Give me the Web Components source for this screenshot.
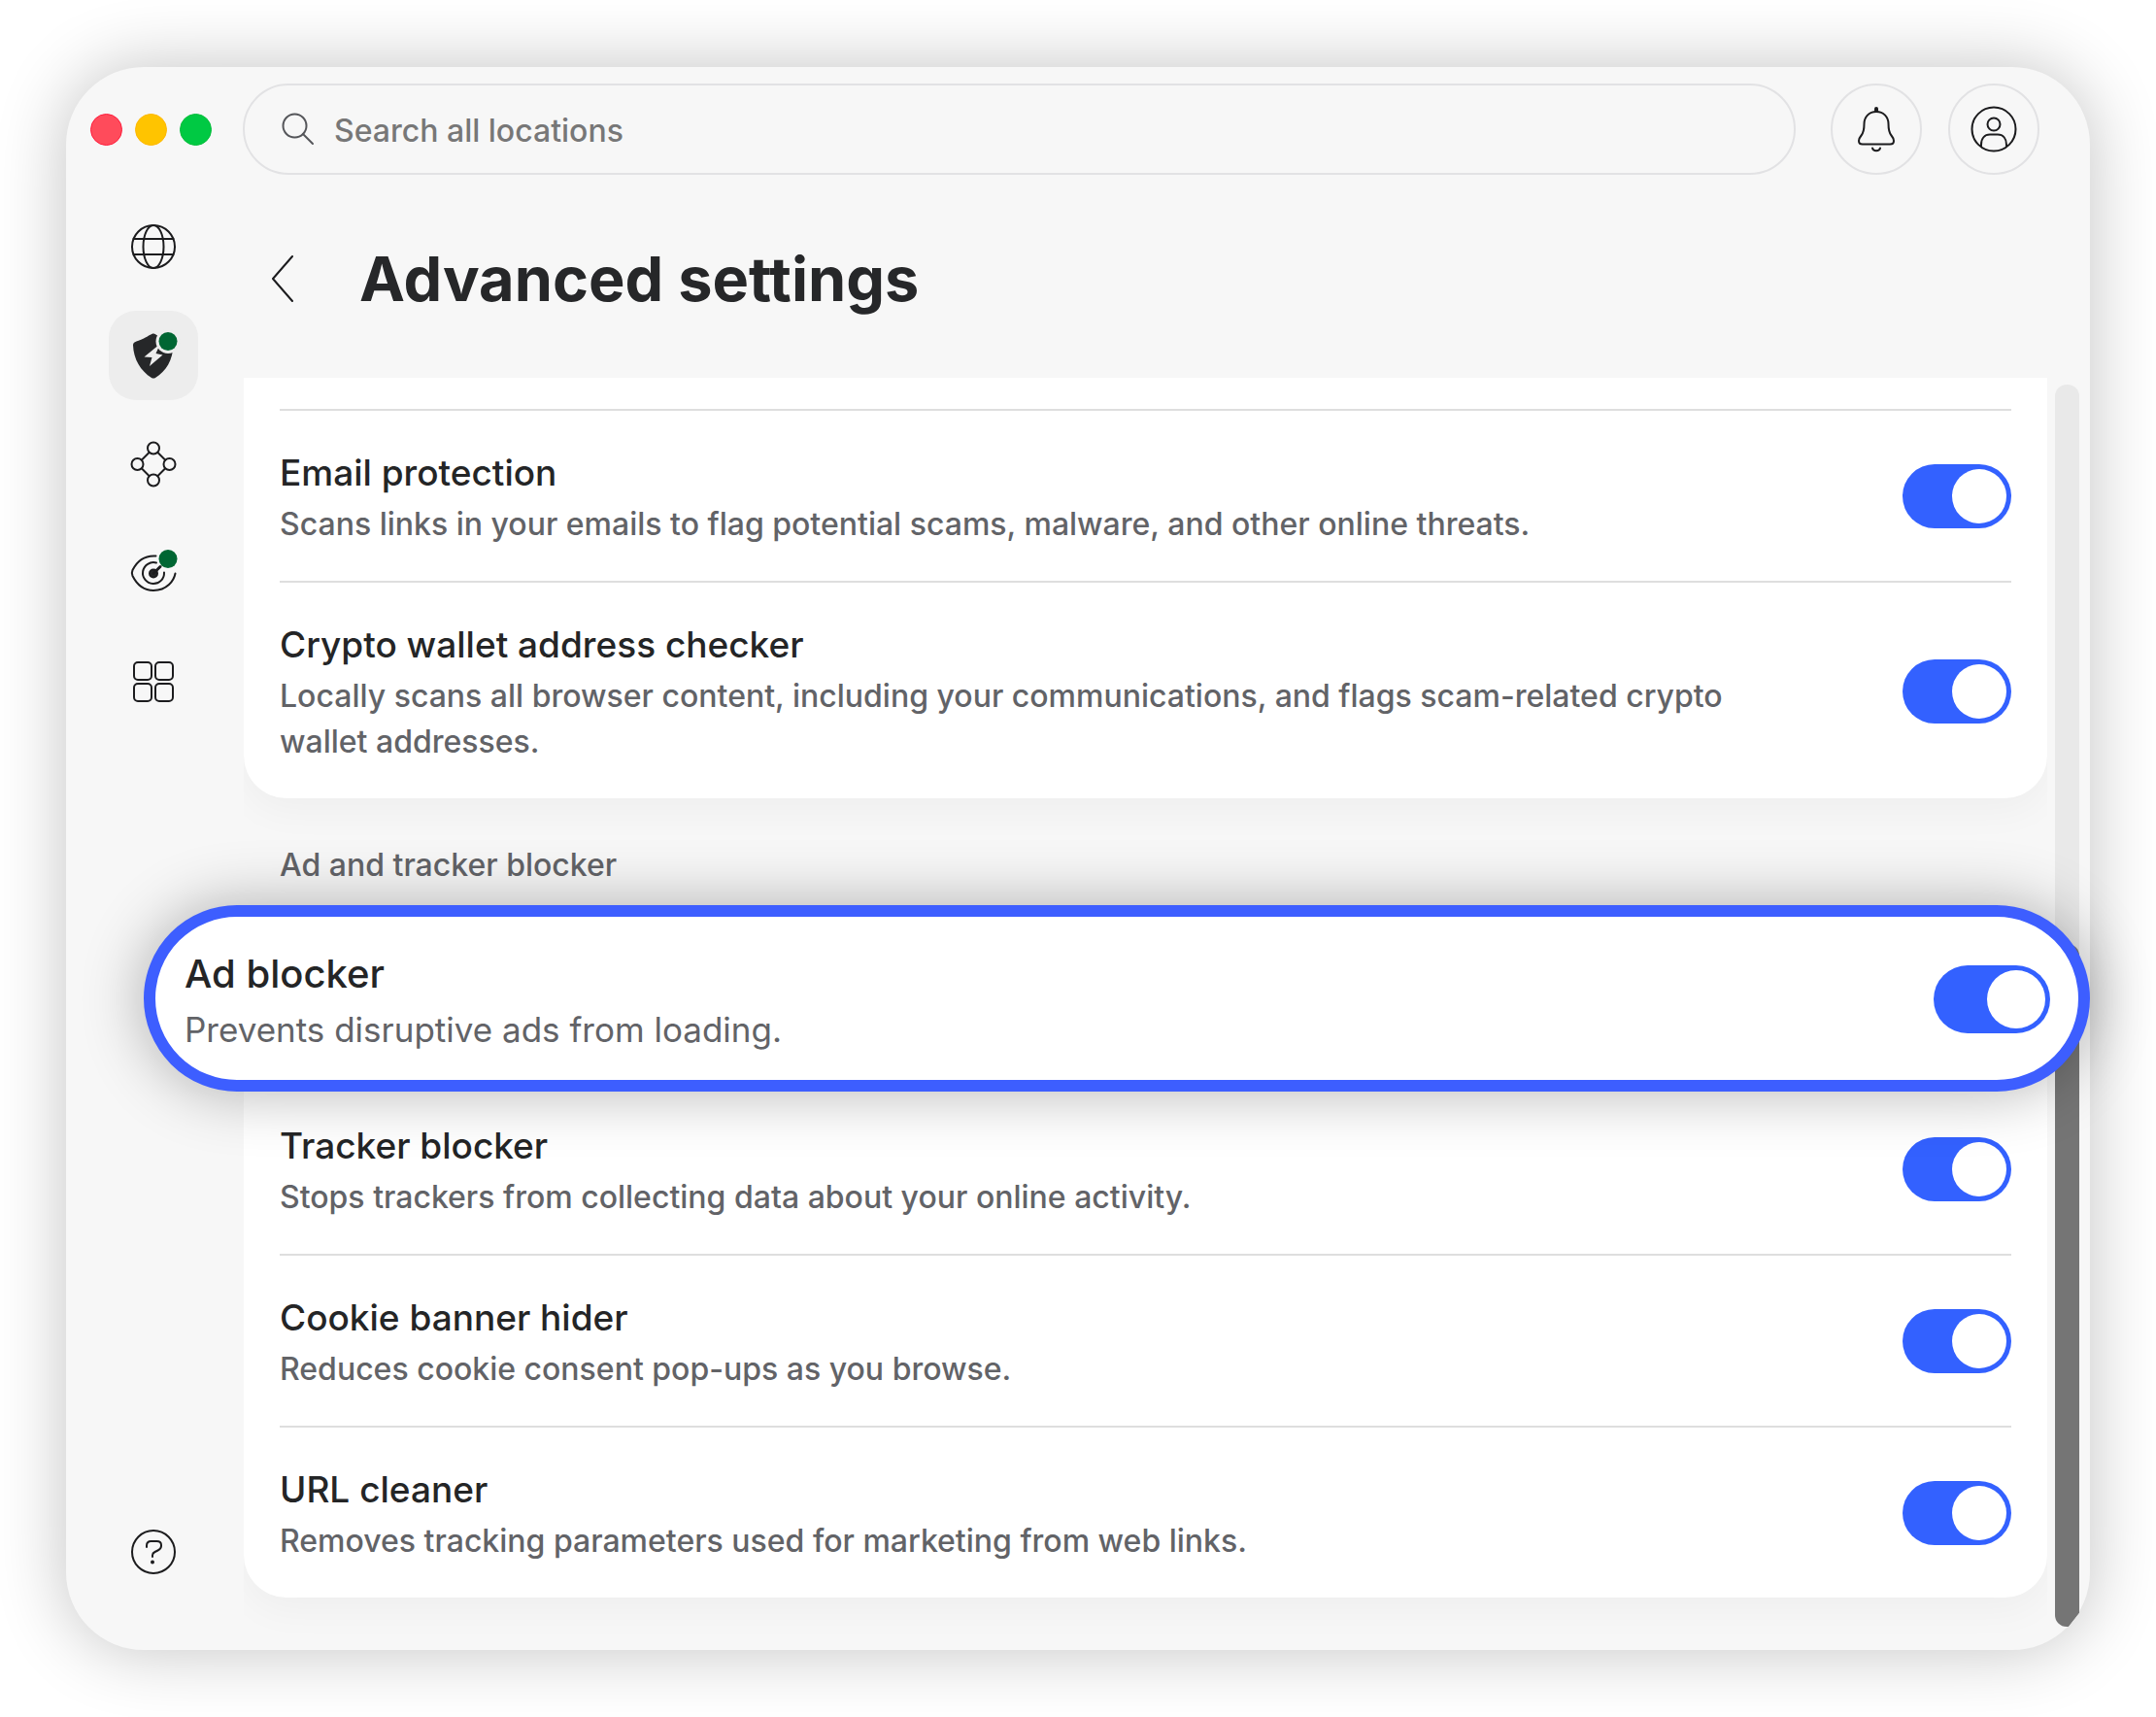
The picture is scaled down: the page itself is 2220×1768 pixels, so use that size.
<!DOCTYPE html>
<html lang="en">
<head>
<meta charset="UTF-8">
<title>Advanced settings</title>
<style>
  body {
    margin: 0;
    background: #fff;
    color: #242526;
    font-family: Inter, "Liberation Sans", sans-serif;
  }
</style>
</head>
<body>
<app-window>
  <top-bar slot="top"></top-bar>
  <side-bar slot="side"></side-bar>
  <page-title slot="title">Advanced settings</page-title>
  <settings-card class="continued">
    <setting-row name="Email protection" text="Scans links in your emails to flag potential scams, malware, and other online threats."></setting-row>
    <setting-row name="Crypto wallet address checker" text="Locally scans all browser content, including your communications, and flags scam-related crypto wallet addresses."></setting-row>
  </settings-card>
  <settings-card class="spotlit" heading="Ad and tracker blocker">
    <setting-row slot="spotlight" class="large" name="Ad blocker" text="Prevents disruptive ads from loading."></setting-row>
    <setting-row name="Tracker blocker" text="Stops trackers from collecting data about your online activity."></setting-row>
    <setting-row name="Cookie banner hider" text="Reduces cookie consent pop-ups as you browse."></setting-row>
    <setting-row name="URL cleaner" text="Removes tracking parameters used for marketing from web links."></setting-row>
  </settings-card>
</app-window>

<script>
class AppWindow extends HTMLElement {
  constructor() {
    super();
    this.attachShadow({mode: "open"});
  }

  getTemplate() {
    const template = document.createElement("template");
    template.innerHTML = `
      <div class="window">
        <slot name="top"></slot>
        <div class="body">
          <slot name="side"></slot>
          <main>
            <slot name="title"></slot>
            <div class="scroller">
              <div class="list"><slot></slot></div>
              <div class="track"><div class="thumb"></div></div>
            </div>
          </main>
        </div>
      </div>
      ${this.getStyles()}
    `;
    return template;
  }

  getStyles() {
    return `
      <style>
      :host {
        display: flex;
        box-sizing: border-box;
        min-height: 100vh;
        padding: 69px 68px;
      }
      .window {
        flex: 1;
        display: flex;
        flex-direction: column;
        min-width: 0;
        background: #f7f7f7;
        border-radius: 80px;
        box-shadow: 0 0 72px rgba(0, 0, 0, .24);
      }
      .body {
        flex: 1;
        display: flex;
      }
      main {
        flex: 1;
        min-width: 0;
        display: flex;
        flex-direction: column;
      }
      .scroller {
        flex: 1;
        display: flex;
        gap: 8px;
        padding-right: 11px;
      }
      /* above the scrollbar, the spotlight runs over it */
      .list {
        position: relative;
        z-index: 1;
        flex: 1;
        min-width: 0;
        padding-bottom: 54px;
      }
      .track {
        display: flex;
        flex-direction: column;
        justify-content: flex-end;
        width: 25px;
        margin: 7px 0 24px;
        border-radius: 12px;
        background: #e9e9e9;
      }
      /* the window corner cuts the end of the thumb */
      .track, .thumb {
        clip-path: polygon(0 0, 100% 0, 100% calc(100% - 14px), calc(100% - 11px) 100%, 0 100%);
      }
      .thumb {
        height: 55%;
        border-radius: 12px;
        background: #757575;
      }
      </style>
    `;
  }

  connectedCallback() {
    this.shadowRoot.appendChild(this.getTemplate().content.cloneNode(true));
  }
}

class TopBar extends HTMLElement {
  constructor() {
    super();
    this.attachShadow({mode: "open"});
  }

  getTemplate() {
    const template = document.createElement("template");
    template.innerHTML = `
      <div class="lights">
        <button class="red" aria-label="Close"></button>
        <button class="yellow" aria-label="Minimize"></button>
        <button class="green" aria-label="Zoom"></button>
      </div>
      <label class="search">
        <svg width="36" height="36" viewBox="0 0 36 36" fill="none" stroke="#55565a" stroke-width="2" stroke-linecap="round">
          <circle cx="14.500" cy="14.500" r="12"/>
          <path d="M23 23L33 33"/>
        </svg>
        <input type="search" placeholder="Search all locations" aria-label="Search all locations">
      </label>
      <button class="round bell" aria-label="Notifications">
        <svg width="48" height="48" viewBox="0 0 48 48" fill="none" stroke="#1c1c1e" stroke-width="2" stroke-linecap="round" stroke-linejoin="round">
          <path d="M24 6C16.500 6 11.500 11.500 11.500 18.500C11.500 25 11 27.500 8.500 30.500C6.600 32.800 6 34 6 36C6 38.200 7.600 39.500 9.800 39.500H38.200C40.400 39.500 42 38.200 42 36C42 34 41.400 32.800 39.500 30.500C37 27.500 36.500 25 36.500 18.500C36.500 11.500 31.500 6 24 6Z"/>
          <path d="M24 3V5" stroke-width="4"/>
          <path d="M20 43.500C20.800 47 27.200 47 28 43.500"/>
        </svg>
      </button>
      <button class="round" aria-label="Account">
        <svg width="48" height="48" viewBox="0 0 48 48" fill="none" stroke="#1c1c1e" stroke-width="2">
          <circle cx="24" cy="24" r="22.500"/>
          <circle cx="24" cy="19" r="6.500"/>
          <path d="M11 42V40C11 33.500 14.500 29.500 20 29.500H28C33.500 29.500 37 33.500 37 40V42"/>
        </svg>
      </button>
      ${this.getStyles()}
    `;
    return template;
  }

  getStyles() {
    return `
      <style>
      :host {
        display: flex;
        align-items: center;
        padding: 17px 52px 0 25px;
      }
      button {
        flex: none;
        box-sizing: border-box;
        padding: 0;
      }
      .lights {
        display: flex;
        gap: 13px;
        margin-right: 32px;
      }
      .lights button {
        width: 33px;
        height: 33px;
        border-radius: 50%;
      }
      .red { background: #ff4b5b; border: 1px solid #ff1c3c; }
      .yellow { background: #ffc400; border: 1px solid #ffb700; }
      .green { background: #00c943; border: 1px solid #00bd38; }
      .search {
        flex: 1;
        display: flex;
        align-items: center;
        gap: 19px;
        box-sizing: border-box;
        height: 94px;
        margin-right: 36px;
        padding: 0 37px;
        border: 2px solid #e2e2e4;
        border-radius: 47px;
      }
      input {
        flex: 1;
        min-width: 0;
        padding: 4px 0 0;
        border: 0;
        outline: 0;
        background: none;
        font: 450 32px/48px Inter, "Liberation Sans", sans-serif;
      }
      input::placeholder {
        color: #777;
        opacity: 1;
      }
      .round {
        display: grid;
        place-items: center;
        width: 94px;
        height: 94px;
        border: 2px solid #e2e2e4;
        border-radius: 50%;
        background: none;
      }
      .bell {
        margin-right: 27px;
      }
      </style>
    `;
  }

  connectedCallback() {
    this.shadowRoot.appendChild(this.getTemplate().content.cloneNode(true));
  }
}

class SideBar extends HTMLElement {
  constructor() {
    super();
    this.attachShadow({mode: "open"});
  }

  getTemplate() {
    const template = document.createElement("template");
    template.innerHTML = `
      <nav>
        <a href="#web" aria-label="Browsing">
          <svg viewBox="0 0 48 48">
            <circle cx="24" cy="24" r="22"/>
            <ellipse cx="24" cy="24" rx="10.500" ry="22"/>
            <path d="M3.500 16H44.500M3.500 32H44.500"/>
          </svg>
        </a>
        <a href="#protection" class="active" aria-label="Protection">
          <svg viewBox="0 0 48 48">
            <path d="M24 1.500C22 1.500 19 4 14 6.500C10 8.500 7 9 4.500 10.500C3.500 11 3 12 3 13.500C3.500 28 11 40 22 47Q24 48 26 47C37 40 44 29 44.500 13C44.500 11 44 10.500 42 10C35 7.500 29 4.500 26.500 2.500Q25 1.500 24 1.500Z" fill="#262729" stroke="none"/>
            <path d="M31 12L14.500 25.500L22.500 26L20 35L33.500 23.500L26.500 22Z" fill="#ededed" stroke="none"/>
            <circle cx="39" cy="9.500" r="12.500" fill="#ededed" stroke="none"/>
            <circle cx="39" cy="9.500" r="9.500" fill="#006633" stroke="none"/>
          </svg>
        </a>
        <a href="#network" aria-label="Network">
          <svg viewBox="0 0 48 48">
            <circle cx="24" cy="7.500" r="6"/>
            <circle cx="7.500" cy="24" r="6"/>
            <circle cx="40.500" cy="24" r="6"/>
            <circle cx="24" cy="40.500" r="6"/>
            <path d="M19.500 12L12 19.500M28.500 12L36 19.500M12 28.500L19.500 36M36 28.500L28.500 36"/>
          </svg>
        </a>
        <a href="#privacy" aria-label="Privacy">
          <svg viewBox="0 0 48 48">
            <path d="M26.500 6.500C13 5.500 6 14 2.500 21Q1.200 24 2.500 27C6 34 13 42 24 42C38 42 45 32 46.500 24.500"/>
            <path d="M27 13.500A11 11 0 1 0 35 23.500"/>
            <circle cx="24" cy="24.500" r="4" fill="#262729"/>
            <path d="M24 24.500L31 17.500" stroke-width="3"/>
            <circle cx="39" cy="9.500" r="9.500" fill="#006633" stroke="none"/>
          </svg>
        </a>
        <a href="#apps" aria-label="Apps">
          <svg viewBox="0 0 48 48">
            <rect x="4" y="4" width="18" height="18" rx="4"/>
            <rect x="26" y="4" width="18" height="18" rx="4"/>
            <rect x="4" y="26" width="18" height="18" rx="4"/>
            <rect x="26" y="26" width="18" height="18" rx="4"/>
          </svg>
        </a>
      </nav>
      <a href="#help" aria-label="Help">
        <svg viewBox="0 0 48 48">
          <circle cx="24" cy="24" r="22"/>
          <path d="M17 19V17.500C17 14.500 19 13 21.500 13H27.500C30.500 13 32 14.500 32 17V18C32 20.500 30.500 21.500 28.500 22.500L25.500 24C23.500 25 23 25.500 23 27.500V29"/>
          <circle cx="23" cy="34.500" r="2" fill="#1c1c1e" stroke="none"/>
        </svg>
      </a>
      ${this.getStyles()}
    `;
    return template;
  }

  getStyles() {
    return `
      <style>
      :host {
        display: flex;
        flex-direction: column;
        justify-content: space-between;
        width: 92px;
        padding: 28px 47px 55px 44px;
      }
      nav {
        display: flex;
        flex-direction: column;
        gap: 20px;
      }
      a {
        display: grid;
        place-items: center;
        height: 92px;
        border-radius: 28px;
      }
      a.active {
        background: #ededed;
      }
      svg {
        width: 48px;
        height: 48px;
        overflow: visible;
        fill: none;
        stroke: #1c1c1e;
        stroke-width: 2;
        stroke-linecap: round;
      }
      </style>
    `;
  }

  connectedCallback() {
    this.shadowRoot.appendChild(this.getTemplate().content.cloneNode(true));
  }
}

class PageTitle extends HTMLElement {
  constructor() {
    super();
    this.attachShadow({mode: "open"});
  }

  getTemplate() {
    const template = document.createElement("template");
    template.innerHTML = `
      <button aria-label="Back">
        <svg width="24" height="48" viewBox="0 0 24 48" fill="none" stroke="#1c1c1e" stroke-width="2" stroke-linecap="round" stroke-linejoin="round">
          <path d="M22 1L2 24L22 47"/>
        </svg>
      </button>
      <h1><slot></slot></h1>
      ${this.getStyles()}
    `;
    return template;
  }

  getStyles() {
    return `
      <style>
      :host {
        display: flex;
        align-items: center;
        gap: 67px;
        box-sizing: border-box;
        height: 209px;
        padding: 4px 28px 0;
      }
      button {
        display: grid;
        padding: 0;
        border: 0;
        background: none;
      }
      h1 {
        margin: 0;
        font-size: 63px;
        line-height: 80px;
        font-weight: 700;
        color: #262729;
      }
      </style>
    `;
  }

  connectedCallback() {
    this.shadowRoot.appendChild(this.getTemplate().content.cloneNode(true));
  }
}

class SettingsCard extends HTMLElement {
  constructor() {
    super();
    this.attachShadow({mode: "open"});
  }

  getTemplate() {
    const heading = this.getAttribute("heading");
    const template = document.createElement("template");
    template.innerHTML = `
      ${heading ? `<h2>${heading}</h2>` : ""}
      <div class="wrap">
        <div class="card"><slot></slot></div>
        <div class="spotlight"><slot name="spotlight"></slot></div>
      </div>
      ${this.getStyles()}
    `;
    return template;
  }

  getStyles() {
    return `
      <style>
      :host {
        display: block;
      }
      h2 {
        margin: 0;
        padding: 45px 37px 22px;
        font-size: 32px;
        line-height: 48px;
        font-weight: 450;
        color: #626367;
      }
      .wrap {
        position: relative;
      }
      .card {
        padding: 0 37px;
        background: #fff;
        border-radius: 44px;
        box-shadow: 0 12px 40px rgba(0, 0, 0, .04);
        clip-path: inset(0 0 -52px 0);
      }
      :host(.continued) .card {
        padding-top: 32px;
        border-radius: 0 0 44px 44px;
      }
      :host(.spotlit) .card {
        padding-top: 177px;
      }
      .spotlight {
        display: none;
      }
      :host(.spotlit) .spotlight {
        display: block;
        position: absolute;
        top: -5px;
        left: -103px;
        right: -44px;
        border: 12px solid #3d5eff;
        border-radius: 96px;
        background: #fff;
        box-shadow: 0 0 64px rgba(0, 0, 0, .3);
      }
      </style>
    `;
  }

  connectedCallback() {
    this.shadowRoot.appendChild(this.getTemplate().content.cloneNode(true));
  }
}

class SettingRow extends HTMLElement {
  constructor() {
    super();
    this.attachShadow({mode: "open"});
  }

  getTemplate() {
    const template = document.createElement("template");
    template.innerHTML = `
      <div class="copy">
        <label for="toggle">${this.getAttribute("name")}</label>
        <p id="text">${this.getAttribute("text")}</p>
      </div>
      <input id="toggle" type="checkbox" role="switch" aria-describedby="text" checked>
      ${this.getStyles()}
    `;
    return template;
  }

  getStyles() {
    return `
      <style>
      :host {
        --knob: 56px;
        display: flex;
        align-items: center;
        gap: 120px;
        padding: 36px 0 35px;
        border-top: 2px solid #dedede;
      }
      .copy {
        flex: 1;
      }
      label {
        display: block;
        margin-bottom: 1px;
        font-size: 37px;
        line-height: 56px;
        font-weight: 500;
      }
      p {
        margin: 0;
        font-size: 32px;
        line-height: 47px;
        font-weight: 450;
        color: #626367;
      }
      input {
        flex: none;
        appearance: none;
        display: flex;
        justify-content: flex-start;
        box-sizing: border-box;
        width: calc(var(--knob) * 2);
        margin: 0;
        padding: 5px;
        border-radius: 40px;
        background: #c4c4c6;
      }
      input:checked {
        justify-content: flex-end;
        background: #3361ff;
      }
      input::before {
        content: "";
        width: var(--knob);
        height: var(--knob);
        border-radius: 50%;
        background: #fff;
      }
      :host(.large) {
        --knob: 60px;
        padding: 28px 29px 26px 30px;
        border: 0;
      }
      :host(.large) label {
        margin-bottom: 0;
        font-size: 40px;
        line-height: 62px;
      }
      :host(.large) p {
        font-size: 35px;
        line-height: 52px;
        font-weight: 400;
      }
      </style>
    `;
  }

  connectedCallback() {
    this.shadowRoot.appendChild(this.getTemplate().content.cloneNode(true));
  }
}

customElements.define("app-window", AppWindow);
customElements.define("top-bar", TopBar);
customElements.define("side-bar", SideBar);
customElements.define("page-title", PageTitle);
customElements.define("settings-card", SettingsCard);
customElements.define("setting-row", SettingRow);
</script>
</body>
</html>
